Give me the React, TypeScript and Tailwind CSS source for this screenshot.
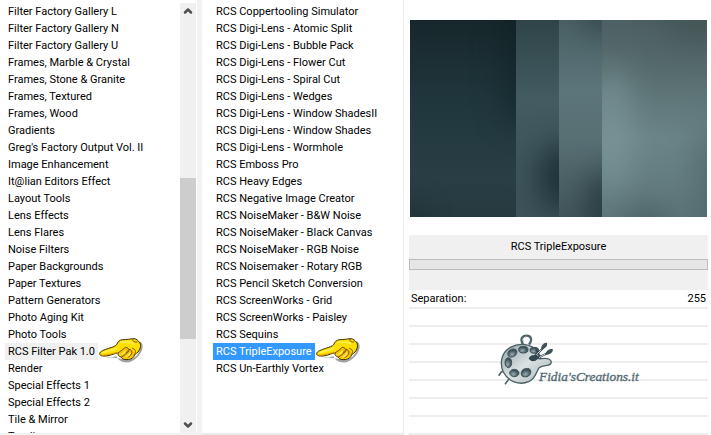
import React from "react";
import clsx from "clsx";
import { FiChevronDown, FiChevronUp } from "react-icons/fi";

const categories = [
  "Filter Factory Gallery L",
  "Filter Factory Gallery N",
  "Filter Factory Gallery U",
  "Frames, Marble & Crystal",
  "Frames, Stone & Granite",
  "Frames, Textured",
  "Frames, Wood",
  "Gradients",
  "Greg's Factory Output Vol. II",
  "Image Enhancement",
  "It@lian Editors Effect",
  "Layout Tools",
  "Lens Effects",
  "Lens Flares",
  "Noise Filters",
  "Paper Backgrounds",
  "Paper Textures",
  "Pattern Generators",
  "Photo Aging Kit",
  "Photo Tools",
  "RCS Filter Pak 1.0",
  "Render",
  "Special Effects 1",
  "Special Effects 2",
  "Tile & Mirror",
  "Toadies",
];

const filters = [
  "RCS Coppertooling Simulator",
  "RCS Digi-Lens - Atomic Split",
  "RCS Digi-Lens - Bubble Pack",
  "RCS Digi-Lens - Flower Cut",
  "RCS Digi-Lens - Spiral Cut",
  "RCS Digi-Lens - Wedges",
  "RCS Digi-Lens - Window ShadesII",
  "RCS Digi-Lens - Window Shades",
  "RCS Digi-Lens - Wormhole",
  "RCS Emboss Pro",
  "RCS Heavy Edges",
  "RCS Negative Image Creator",
  "RCS NoiseMaker - B&W Noise",
  "RCS NoiseMaker - Black Canvas",
  "RCS NoiseMaker - RGB Noise",
  "RCS Noisemaker - Rotary RGB",
  "RCS Pencil Sketch Conversion",
  "RCS ScreenWorks - Grid",
  "RCS ScreenWorks - Paisley",
  "RCS Sequins",
  "RCS TripleExposure",
  "RCS Un-Earthly Vortex",
];

const PointingHand = () => (
  <svg
    viewBox="0 0 135 81"
    className="pointer-events-none absolute -top-1.5 left-full h-[27px] w-[45px]"
    aria-hidden="true"
  >
    <path
      d="M14 58C30 64 44 60 56 58C58 68 74 80 94 76C112 70 134 50 134 28C134 18 128 14 124 12C134 44 112 66 92 68Z"
      fill="#555"
      opacity=".55"
    />
    <path
      d="M5 50C5 43 20 38 32 34C42 31 52 28 56 23C59 15 64 9 74 8C87 8 96 6 104 5C116 4 120 11 126 18C130 27 126 38 120 45C114 51 109 52 108 58C104 66 93 68 84 68C76 68 71 64 70 60C61 58 59 53 61 47C50 49 42 54 30 56C18 58 5 58 5 50Z"
      fill="#ffdf00"
      stroke="#3a2e00"
      strokeWidth="3"
      strokeLinejoin="round"
    />
    <path d="M62 47C66 41 76 37 83 30L104 38L110 46L104 60L84 66L72 59Z" fill="#fbc000" />
    <path d="M12 54C28 56 44 48 60 46" fill="none" stroke="#e59a00" strokeWidth="3" />
    <path
      d="M61 47C68 42 75 38 81 32M70 60C78 56 87 51 88 42M83 31C96 32 96 46 86 48M94 37C106 40 104 54 90 61M104 34C116 38 114 48 108 54M104 7C103 13 109 16 117 15"
      fill="none"
      stroke="#7a5200"
      strokeWidth="3"
      strokeLinecap="round"
    />
    <path
      d="M15 47C30 42 47 39 57 33M68 15C82 18 98 11 108 21M72 51C77 49 80 46 82 43M85 59C91 57 94 53 96 49"
      fill="none"
      stroke="#fff04a"
      strokeWidth="5"
      strokeLinecap="round"
    />
  </svg>
);

const Preview = () => (
  <svg
    viewBox="0 0 297 197"
    preserveAspectRatio="none"
    className="block h-[197px] w-full bg-[#3d5258]"
    role="img"
    aria-label="RCS TripleExposure preview"
  >
    <defs>
      <linearGradient id="a" x2="0" y2="1">
        <stop stopColor="#17272b" />
        <stop offset=".4" stopColor="#20363d" />
        <stop offset=".8" stopColor="#293e45" />
        <stop offset="1" stopColor="#26393f" />
      </linearGradient>
      <linearGradient id="b" x2="0" y2="1">
        <stop stopColor="#2f4449" />
        <stop offset=".4" stopColor="#435b61" />
        <stop offset=".65" stopColor="#3f575d" />
        <stop offset="1" stopColor="#3d5359" />
      </linearGradient>
      <linearGradient id="c" x2="0" y2="1">
        <stop stopColor="#4a6065" />
        <stop offset=".35" stopColor="#5c757a" />
        <stop offset=".6" stopColor="#586f74" />
        <stop offset="1" stopColor="#42565c" />
      </linearGradient>
      <linearGradient id="d" x2="0" y2="1">
        <stop stopColor="#4d5f62" />
        <stop offset=".25" stopColor="#566b6e" />
        <stop offset=".6" stopColor="#6b8488" />
        <stop offset="1" stopColor="#5f777b" />
      </linearGradient>
      <filter id="soft" filterUnits="userSpaceOnUse" x="-80" y="-80" width="460" height="360" colorInterpolationFilters="sRGB">
        <feGaussianBlur stdDeviation="16" />
      </filter>
      <clipPath id="clipA"><path d="M0 0H107V197H0Z" /></clipPath>
      <clipPath id="clipB"><path d="M106 0H150V197H106Z" /></clipPath>
      <clipPath id="clipC"><path d="M149 0H193V197H149Z" /></clipPath>
      <clipPath id="clipD"><path d="M192 0H297V197H192Z" /></clipPath>
    </defs>
    <g clipPath="url(#clipA)">
      <path d="M0 0H107V197H0Z" fill="url(#a)" />
      <path d="M96 -30H140V100H96Z" fill="#0d1e22" opacity=".6" filter="url(#soft)" />
      <ellipse cx="-4" cy="204" rx="14" ry="20" fill="#182a2c" opacity=".7" filter="url(#soft)" />
    </g>
    <g clipPath="url(#clipB)">
      <path d="M106 0H150V197H106Z" fill="url(#b)" />
      <ellipse cx="154" cy="157" rx="24" ry="34" fill="#1a2d33" filter="url(#soft)" />
    </g>
    <g clipPath="url(#clipC)">
      <path d="M149 0H193V197H149Z" fill="url(#c)" />
      <ellipse cx="196" cy="-4" rx="24" ry="18" fill="#2c3f44" opacity=".8" filter="url(#soft)" />
      <ellipse cx="200" cy="185" rx="24" ry="34" fill="#24363c" opacity=".9" filter="url(#soft)" />
    </g>
    <g clipPath="url(#clipD)">
      <path d="M192 0H297V197H192Z" fill="url(#d)" />
      <ellipse cx="200" cy="110" rx="20" ry="66" fill="#819b9f" opacity=".7" filter="url(#soft)" />
      <ellipse cx="290" cy="0" rx="40" ry="24" fill="#3f4f4d" opacity=".6" filter="url(#soft)" />
      <ellipse cx="238" cy="206" rx="20" ry="18" fill="#3b5054" opacity=".8" filter="url(#soft)" />
      <path d="M288 110H320V230H288Z" fill="#465b5f" opacity=".6" filter="url(#soft)" />
    </g>
  </svg>
);

const Logo = () => (
  <svg
    viewBox="0 0 480 240"
    className="absolute top-[30px] left-1/2 -ml-[70px] h-20 w-40"
    role="img"
    aria-label="Fidia'sCreations.it"
  >
    <defs>
      <linearGradient id="palette" x2="1" y2="1">
        <stop stopColor="#8fa1a5" />
        <stop offset=".5" stopColor="#dce2e3" />
        <stop offset="1" stopColor="#a4b2b5" />
      </linearGradient>
      <radialGradient id="well" cx=".4" cy=".65">
        <stop stopColor="#9badb2" />
        <stop offset="1" stopColor="#3c5159" />
      </radialGradient>
    </defs>
    <path d="M102 73C91 54 102 47 113 47C125 47 132 58 120 74" fill="none" stroke="#50646a" strokeWidth="7" />
    <path d="M105 66C98 56 107 52 113 51" fill="none" stroke="#cbd4d7" strokeWidth="3" />
    <path d="M47 151L37 156L29 167M62 174L57 181L48 193" fill="none" stroke="#52666c" strokeWidth="5" />
    <path
      d="M145 94C128 72 93 66 64 82C37 98 31 129 43 156C57 184 91 197 119 185C143 174 142 150 152 142C164 135 181 139 186 130C190 117 173 113 158 116C144 118 135 110 145 94Z"
      fill="url(#palette)"
      stroke="#4a5f66"
      strokeWidth="4"
    />
    <g fill="url(#well)" stroke="#3d535a" strokeWidth="3">
      <ellipse cx="70" cy="99" rx="14" ry="11" transform="rotate(-30 70 99)" />
      <ellipse cx="103" cy="89" rx="14" ry="10" />
      <ellipse cx="58" cy="128" rx="10" ry="15" />
      <ellipse cx="76" cy="159" rx="14" ry="11" />
      <ellipse cx="111" cy="158" rx="15" ry="12" transform="rotate(-25 111 158)" />
      <ellipse cx="136" cy="91" rx="13" ry="9" />
    </g>
    <path d="M119 116C123 104 139 103 149 108C149 117 138 127 126 122Z" fill="#2d4249" />
    <path d="M128 117L171 76M130 121L187 94M142 91L154 112" stroke="#344950" strokeWidth="6" strokeLinecap="round" />
    <path d="M142 104L157 89M150 113L169 102" stroke="#c4cfd2" strokeWidth="3" />
    <path d="M157 87C155 77 166 66 174 69C176 78 167 87 157 87M169 103C171 93 182 84 192 88C191 99 180 106 169 103" fill="#3c5259" />
    <text
      x="150"
      y="182"
      fill="#526a71"
      stroke="#526a71"
      strokeWidth="1"
      className="font-['Liberation_Serif',serif] text-[40px] italic"
    >
      Fidia'sCreations.it
    </text>
  </svg>
);

type ListProps = {
  items: string[];
  selected: string;
  label: string;
  active?: boolean;
};

const FilterList = ({ items, selected, label, active }: ListProps) => (
  <ul aria-label={label} className="min-w-0 flex-1 overflow-hidden">
    {items.map((item) => (
      <li key={item} className="flex h-[17px]">
        <button
          type="button"
          aria-pressed={item === selected}
          className={clsx(
            "relative h-[17px] px-[3px] text-left whitespace-nowrap",
            item === selected && (active ? "bg-[#3399ff] text-white" : "bg-[#f0f0f0]")
          )}
        >
          {item}
          {item === selected && <PointingHand />}
        </button>
      </li>
    ))}
  </ul>
);

export default function App() {
  return (
    <main className="grid h-screen grid-cols-[202fr_202fr_307fr] overflow-hidden bg-white font-[Roboto,sans-serif] text-[11px] leading-[18px] text-black">
      {/* Categories */}
      <section className="flex min-h-0 min-w-0 border-r-[5px] border-b-2 border-[#f2f2f2] pt-[3px]">
        <div className="flex min-w-0 flex-1 overflow-hidden pl-[5px]">
          <FilterList items={categories} selected="RCS Filter Pak 1.0" label="Categories" />
        </div>
        <div className="mr-px flex w-4 flex-col bg-[#f0f0f0]">
          <button type="button" aria-label="Scroll up" className="flex h-4 items-center justify-center text-[#505050]">
            <FiChevronUp className="size-3" strokeWidth={5} />
          </button>
          <div className="flex flex-1 flex-col">
            <div className="grow-[159]" />
            <div className="grow-[160] bg-[#cdcdcd]" />
            <div className="grow-[77]" />
          </div>
          <button type="button" aria-label="Scroll down" className="flex h-[17px] items-center justify-center text-[#505050]">
            <FiChevronDown className="size-3" strokeWidth={5} />
          </button>
        </div>
      </section>

      {/* Filters of the selected category */}
      <section className="flex min-h-0 min-w-0 border-r border-b-2 border-[#ececec] pt-[3px] pl-[11px]">
        <FilterList items={filters} selected="RCS TripleExposure" label="Filters" active />
      </section>

      {/* Preview and settings */}
      <section className="flex min-h-0 min-w-0 flex-col pt-5 pr-[3px] pl-[5px]">
        <div className="px-px">
          <Preview />
        </div>
        <div className="mt-[18px] h-[55px] shrink-0 bg-[#f0f0f0]">
          <h1 className="h-6 text-center leading-6">RCS TripleExposure</h1>
          <div className="h-[11px] border border-[#bcbcbc] bg-[#e6e6e6]" />
        </div>
        <div className="relative">
          <div className="flex h-[19px] justify-between border-b-2 border-[#eeeeee] px-0.5">
            <label htmlFor="separation">Separation:</label>
            <input id="separation" defaultValue="255" className="w-12 bg-transparent text-right outline-none" />
          </div>
          {[1, 2, 3, 4, 5, 6, 7].map((slot) => (
            <div key={slot} className="h-[18px] border-b-2 border-[#eeeeee]" />
          ))}
          <Logo />
        </div>
      </section>
    </main>
  );
}
